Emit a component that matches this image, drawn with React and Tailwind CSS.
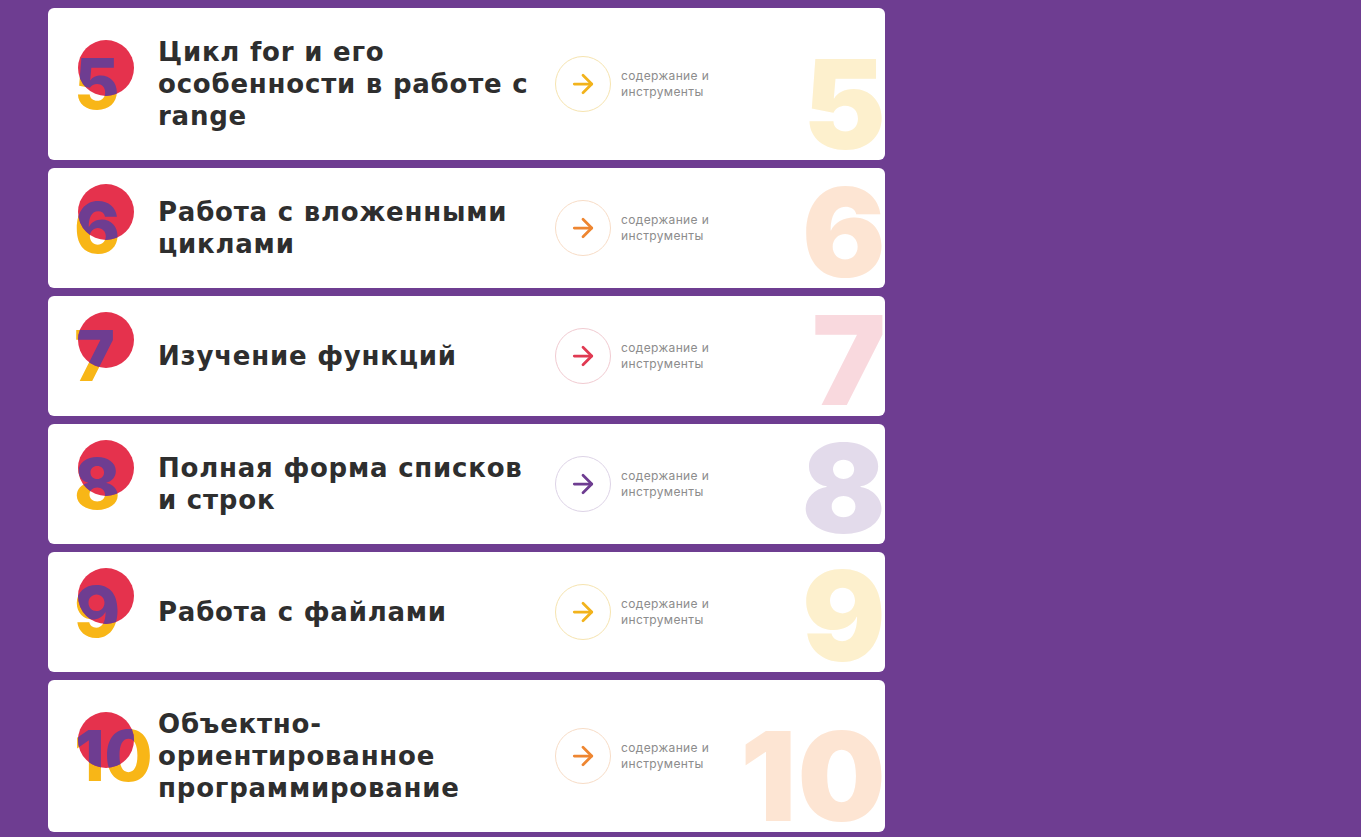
import React from 'react';
import { ArrowRight } from 'lucide-react';

const lessons = [
    { n: '5', title: 'Цикл for и его особенности в работе с range', h: 'h-[152px]', accent: 'text-[#f2b31c]', ring: 'border-[#f6e4b0]', ghost: 'text-[#fdf0cd]' },
    { n: '6', title: 'Работа с вложенными циклами', h: 'h-[120px]', accent: 'text-[#ee8631]', ring: 'border-[#f7dcc6]', ghost: 'text-[#fde5d3]' },
    { n: '7', title: 'Изучение функций', h: 'h-[120px]', accent: 'text-[#e03a52]', ring: 'border-[#f1cbd1]', ghost: 'text-[#f9d9de]' },
    { n: '8', title: 'Полная форма списков и строк', h: 'h-[120px]', accent: 'text-[#6e3d91]', ring: 'border-[#ddd3e6]', ghost: 'text-[#e3dbeb]' },
    { n: '9', title: 'Работа с файлами', h: 'h-[120px]', accent: 'text-[#f2b31c]', ring: 'border-[#f6e4b0]', ghost: 'text-[#fdf0cd]' },
    { n: '10', title: 'Объектно-ориентированное программирование', h: 'h-[152px]', accent: 'text-[#ee8631]', ring: 'border-[#f7dcc6]', ghost: 'text-[#fde5d3]' },
];

function Badge({ n }) {
    return (
        <div className="relative w-[84px] h-[100px] shrink-0">
            {/* yellow number */}
            <div className="h-[100px] flex items-center text-[70px] font-extrabold leading-none tracking-[-0.01em] text-[#f8b617]">
                {n}
            </div>
            {/* red circle, number turns purple inside it */}
            <div className="absolute left-[4px] top-[6px] w-[56px] h-[56px] rounded-full bg-[#e5324d] overflow-hidden">
                <div className="absolute left-[-4px] top-[-6px] h-[100px] flex items-center text-[70px] font-extrabold leading-none tracking-[-0.01em] text-[#6e3d91]">
                    {n}
                </div>
            </div>
        </div>
    );
}

function LessonCard({ lesson }) {
    return (
        <div className={`relative ${lesson.h} bg-white rounded-md overflow-hidden flex items-center pl-[26px]`}>
            <Badge n={lesson.n} />

            <h3 className="w-[397px] shrink-0 pr-3 font-['DejaVu_Sans',sans-serif] text-[26px] leading-[32px] font-bold tracking-[0.03em] text-[#2e2e2e]">
                {lesson.title}
            </h3>

            <div className={`w-[56px] h-[56px] shrink-0 rounded-full border ${lesson.ring} flex items-center justify-center ${lesson.accent}`}>
                <ArrowRight size={30} strokeWidth={2.2} />
            </div>

            <div className="ml-[10px] text-[12px] leading-[16px] tracking-[0.03em] text-[#8c8c8c]">
                содержание и<br />инструменты
            </div>

            {/* big faded number */}
            <div className={`absolute right-[-2px] bottom-[-6px] text-[124px] font-black leading-none tracking-[0.01em] ${lesson.ghost}`}>
                {lesson.n}
            </div>
        </div>
    );
}

export default function App() {
    return (
        <div className="min-h-screen w-full bg-[#6e3d91] font-['Inter',sans-serif]">
            <div className="w-[837px] ml-[48px] pt-[8px] flex flex-col gap-[8px]">
                {lessons.map((l) => (
                    <LessonCard key={l.n} lesson={l} />
                ))}
            </div>
        </div>
    );
}
